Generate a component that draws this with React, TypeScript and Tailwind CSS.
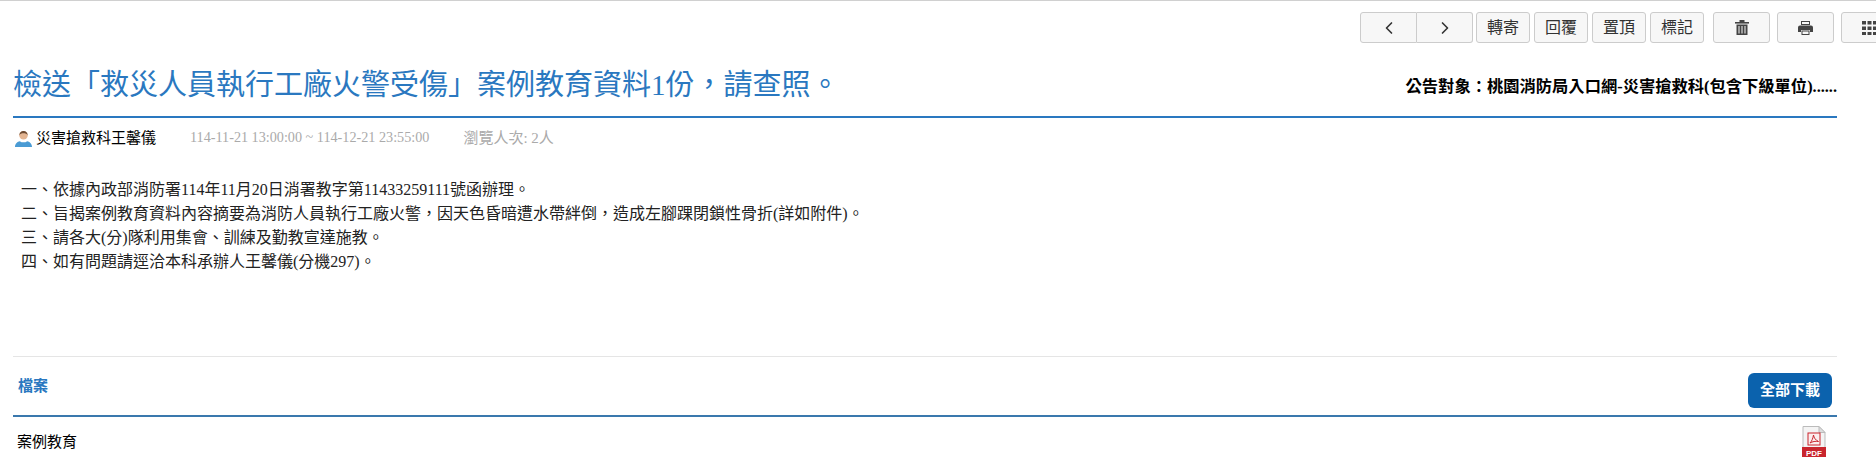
import { ChevronLeft, ChevronRight } from 'lucide-react'

const SERIF = 'font-["Liberation_Serif","Noto_Sans_CJK_TC",serif]'
const btn = 'h-[31px] rounded-[3px] border border-[#ccc] bg-[#f7f7f7] flex items-center justify-center text-[#333]'

function TrashIcon() {
  return (
    <svg width="14" height="15" viewBox="0 0 14 15" fill="#444">
      <rect x="0" y="2" width="14" height="1.6" />
      <rect x="4.5" y="0" width="5" height="2" />
      <path d="M1.5 4.5h11V15h-11z M3.5 6v7.5h1V6z M6.5 6v7.5h1V6z M9.5 6v7.5h1V6z" fillRule="evenodd" />
    </svg>
  )
}

function PrintIcon() {
  return (
    <svg width="15" height="14" viewBox="0 0 15 14" fill="#444">
      <path d="M3 0h9v4H3z M4 1v2h7V1z" fillRule="evenodd" />
      <path d="M2 4.5h11a2 2 0 0 1 2 2V11h-3V9H3v2H0V6.500a2 2 0 0 1 2-2z" />
      <path d="M3.500 9.500h8V14h-8z M4.500 10.500v2.500h6v-2.500z" fillRule="evenodd" />
    </svg>
  )
}

function GridIcon() {
  const cells = [0, 5.5, 11]
  return (
    <svg width="15" height="14" viewBox="0 0 15 14" fill="#444">
      {cells.map((y) => cells.map((x) => <rect key={`${x}-${y}`} x={x} y={y} width="4" height="3.500" />))}
    </svg>
  )
}

function UserIcon() {
  return (
    <svg width="17" height="17" viewBox="0 0 16 16">
      <path d="M0 16c0-3.500 2.500-5 4.500-5.500 2 1.500 5 1.500 7 0 2 .5 4.500 2 4.500 5.500z" fill="#4a9bd4" />
      <circle cx="8" cy="5" r="4" fill="#e3b592" />
      <path d="M4 5a4 4 0 0 1 8 0c-1-1.500-2-2-4-2S5 3.500 4 5z" fill="#6b4a32" />
    </svg>
  )
}

function PdfIcon() {
  return (
    <svg width="26" height="32" viewBox="0 0 26 32">
      <path d="M2 .5h16l6 6V23H2z" fill="#f4f4f4" stroke="#bbb" />
      <path d="M18 .5V6.500h6z" fill="#ddd" stroke="#bbb" />
      <rect x="7" y="7" width="12" height="12" fill="#fbeeee" stroke="#c9252d" />
      <path d="M9 17c2-2 3-5 3.500-8 .5 3 2 5 5 6.500-3-.5-6 0-8.500 1.500z" fill="none" stroke="#c9252d" />
      <rect x="1" y="21" width="24" height="10" fill="#c9252d" />
      <text x="13" y="29.500" textAnchor="middle" fontSize="8" fontWeight="bold" fontFamily="Liberation Sans" fill="#fff">PDF</text>
    </svg>
  )
}

export default function App() {
  return (
    <div className={`w-[1876px] h-[464px] overflow-hidden bg-white border-t border-[#d0d0d0] ${SERIF}`}>
      {/* 工具列 */}
      <div className="flex justify-end mr-[-22px] mt-[11px]">
        <div className="flex mr-[3px]">
          <button className={`${btn} w-[57px] rounded-r-none`}><ChevronLeft size={20} /></button>
          <button className={`${btn} w-[56px] rounded-l-none border-l-0`}><ChevronRight size={20} /></button>
        </div>
        <div className="flex gap-[4px] mr-[9px]">
          {['轉寄', '回覆', '置頂', '標記'].map((t) => (
            <button key={t} className={`${btn} w-[54px] text-[16px]`}>{t}</button>
          ))}
        </div>
        <div className="flex gap-[7px]">
          <button className={`${btn} w-[57px]`}><TrashIcon /></button>
          <button className={`${btn} w-[57px]`}><PrintIcon /></button>
          <button className={`${btn} w-[57px]`}><GridIcon /></button>
        </div>
      </div>

      <div className="ml-[13px] w-[1824px]">
        {/* 標題 */}
        <div className="flex items-end justify-between h-[75px] pb-[11px] border-b-2 border-[#2a78c0]">
          <h1 className="text-[29px] leading-[40px] text-[#2a78c0] whitespace-nowrap">檢送「救災人員執行工廠火警受傷」案例教育資料1份，請查照。</h1>
          <div className="text-[16.3px] font-bold text-black whitespace-nowrap pb-[6px]">公告對象：桃園消防局入口網-災害搶救科(包含下級單位)......</div>
        </div>

        {/* 發文資訊 */}
        <div className="flex items-center h-[40px] text-[15px] whitespace-nowrap">
          <span className="ml-[2px] mr-[4px]"><UserIcon /></span>
          <span className="text-black">災害搶救科王馨儀</span>
          <span className="ml-[34px] text-[14.2px] text-[#aaa]">114-11-21 13:00:00 ~ 114-12-21 23:55:00</span>
          <span className="ml-[34px] text-[#aaa]">瀏覽人次: 2人</span>
        </div>

        {/* 內文 */}
        <div className="mt-[20px] pl-[8px] text-[16px] leading-[24px] text-[#222] h-[179px] border-b border-[#e5e5e5]">
          <p>一、依據內政部消防署114年11月20日消署教字第11433259111號函辦理。</p>
          <p>二、旨揭案例教育資料內容摘要為消防人員執行工廠火警，因天色昏暗遭水帶絆倒，造成左腳踝閉鎖性骨折(詳如附件)。</p>
          <p>三、請各大(分)隊利用集會、訓練及勤教宣達施教。</p>
          <p>四、如有問題請逕洽本科承辦人王馨儀(分機297)。</p>
        </div>

        {/* 檔案 */}
        <div className="flex items-center justify-between h-[60px] border-b-2 border-[#3a78ad] pl-[5px] pr-[5px]">
          <span className="text-[15px] font-bold text-[#2a78c0]">檔案</span>
          <button className="w-[84px] h-[35px] mt-[9px] rounded-[6px] bg-[#0b62ad] text-white text-[15px] font-bold">全部下載</button>
        </div>
        <div className="flex items-center justify-between h-[50px] pl-[4px] pr-[10px]">
          <span className="text-[15px] text-black">案例教育</span>
          <PdfIcon />
        </div>
      </div>
    </div>
  )
}
